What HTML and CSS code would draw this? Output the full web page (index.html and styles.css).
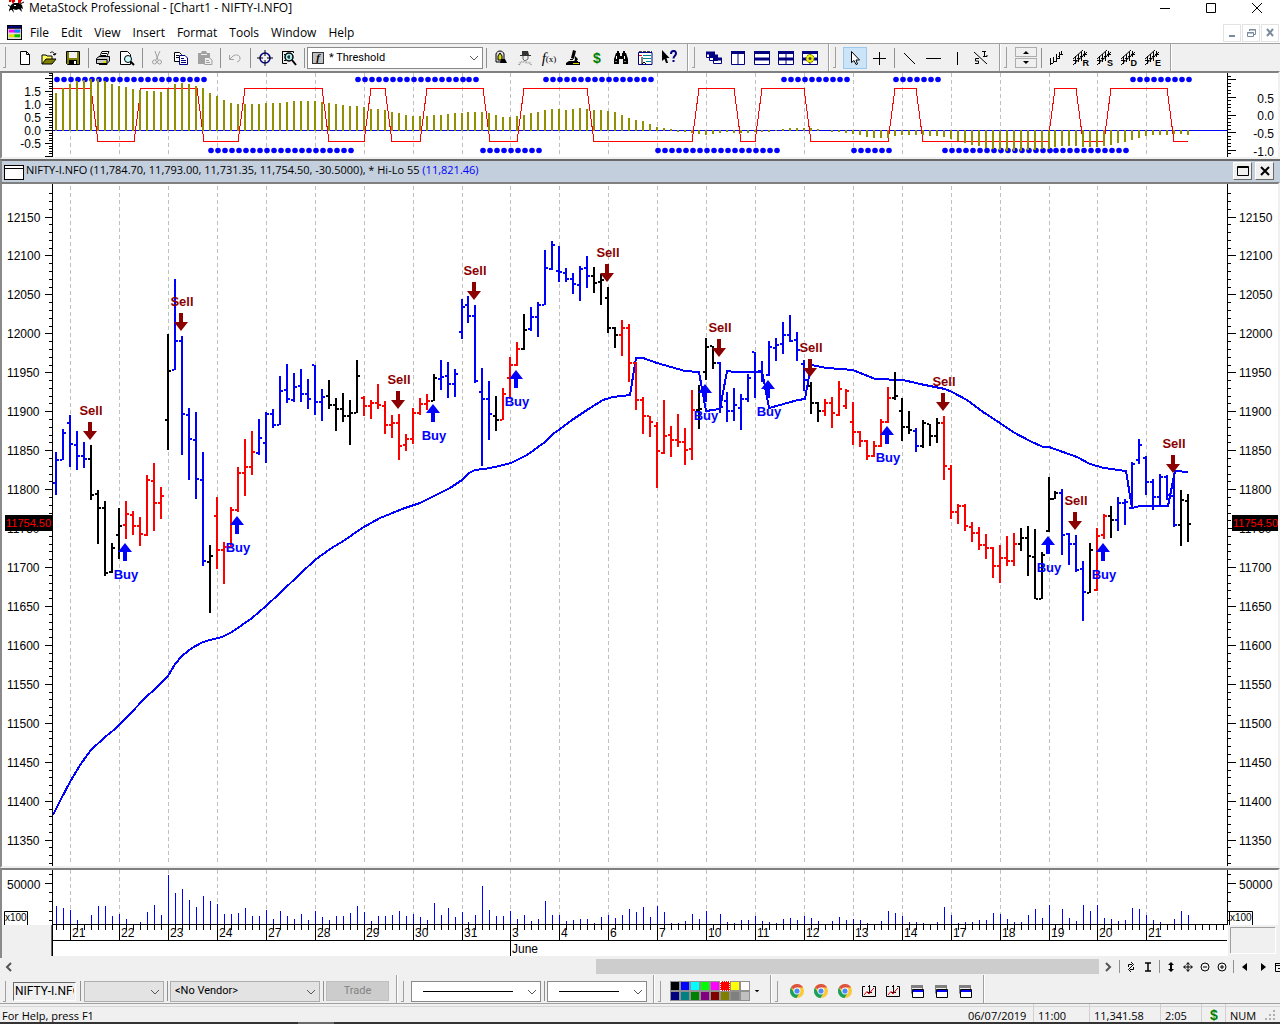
FILE: index.html
```html
<!DOCTYPE html>
<html lang="en">
<head>
<meta charset="utf-8">
<meta name="viewport" content="width=device-width, initial-scale=1">
<title>MetaStock Professional - [Chart1 - NIFTY-I.NFO]</title>
<link rel="stylesheet" href="styles.css">
</head>
<body>
<svg class="defs" aria-hidden="true">
  <defs>
    <symbol id="i-chrome" viewBox="0 0 16 16"><circle cx="8" cy="8" r="7" fill="#fbc938"/><path d="M8 8 1.9 4.5A7 7 0 0 1 14.1 4.6H8z" fill="#de5246"/><path d="M1.9 4.5A7 7 0 0 0 7.5 15L10.8 9.6 8 8 5 9.4z" fill="#1aa15f"/><circle cx="8" cy="8" r="3.4" fill="#fff"/><circle cx="8" cy="8" r="2.6" fill="#4c8bf5"/></symbol>
    <symbol id="i-chartwin" viewBox="0 0 16 16"><path d="M4 3.500H1.500V13.500H14.500V3.500H12M6 9.500H11M8.500 2V10M7 3.500H8.500" fill="none" stroke="#000"/><path d="M3 12 6 8.500 8 11 11 7 13 5" fill="none" stroke="#e00000"/></symbol>
    <symbol id="i-wins" viewBox="0 0 16 16"><path d="M2 2H14V5H2z" fill="#808080"/><path d="M2.500 5V10.500H4M13.500 5V7" stroke="#808080" fill="none"/><path d="M3.500 6.500H14.500V14.500H3.500z" fill="#fff" stroke="#000"/><path d="M4 7H14V9H4z" fill="#00f"/></symbol>
    <symbol id="i-bars" viewBox="0 0 16 16"><path d="M2.500 8V15M2.500 13.500H5M5.500 7V13M5.500 11.500H8M8.500 4V12M8.500 8.500H11M11.500 2V9M10 6.500H12M12 4.500H15M13.500 1V5" fill="none" stroke="#000"/></symbol>
    <symbol id="i-channel" viewBox="0 0 16 16"><path d="M1 9 11 0M1 15 15 2M3.500 6V14M6.500 4V12M9.500 2V11M12.500 1V7M1 10.500H5M5 8.500H8M8 6.500H11M11 4.500H15" fill="none" stroke="#000"/></symbol>
    <symbol id="i-chev" viewBox="0 0 10 6"><path d="M1 1 5 5 9 1" fill="none" stroke="#555" stroke-width="1"/></symbol>
  </defs>
</svg>

<header class="titlebar">
  <svg class="app-icon" viewBox="0 0 16 14" aria-hidden="true"><path d="M2 0V2M4 0 5 2 6 0V2M10 0H14M10 2H13" stroke="#d00" fill="none" stroke-width="2"/><path d="M3 5 6 3H11L14 5 15 9 13 8 14 12 11 9 8 10 5 9 6 13 3 9 1 12 2 7z" fill="#000"/><path d="M0 5 3 7M12 4 16 2M1 10 4 9" stroke="#000" fill="none"/><path d="M6 5H8V6H6z" fill="#fff"/></svg>
  <h1>MetaStock Professional - [Chart1 - NIFTY-I.NFO]</h1>
  <div class="win-buttons">
    <button type="button" aria-label="Minimize"><svg viewBox="0 0 12 12"><path d="M1 6.500H11" stroke="#000"/></svg></button>
    <button type="button" aria-label="Maximize"><svg viewBox="0 0 12 12"><path d="M1.500 1.500H10.500V10.500H1.500z" stroke="#000" fill="none"/></svg></button>
    <button type="button" aria-label="Close"><svg viewBox="0 0 12 12"><path d="M1 1 11 11M11 1 1 11" stroke="#000"/></svg></button>
  </div>
</header>

<nav class="menubar" aria-label="Main menu">
  <svg class="doc-icon" viewBox="0 0 16 16" aria-hidden="true"><path d="M0 0H16V16H0z" fill="#000"/><path d="M1 1H15V3H1z" fill="#000080"/><path d="M1 4H15V15H1z" fill="#ddd"/><path d="M2 5H14V8H2z" fill="#f0f"/><path d="M8 5H14V8H8z" fill="#08f"/><path d="M2 10H14V13H2z" fill="#dd0"/><path d="M8 10H14V13H8z" fill="#0b0"/></svg>
  <button type="button">File</button><button type="button">Edit</button><button type="button">View</button><button type="button">Insert</button><button type="button">Format</button><button type="button">Tools</button><button type="button">Window</button><button type="button">Help</button>
  <div class="mdi-buttons">
    <button type="button" aria-label="Minimize chart"><svg viewBox="0 0 12 12"><path d="M3 9H9" stroke="#7a8a9e" stroke-width="2"/></svg></button>
    <button type="button" aria-label="Restore chart"><svg viewBox="0 0 12 12"><path d="M4.500 4V2.500H10.500V7.500H9M4 3H11M2.500 5.500H8.500V9.500H2.500zM2 6H9" stroke="#7a8a9e" fill="none"/></svg></button>
    <button type="button" aria-label="Close chart"><svg viewBox="0 0 12 12"><path d="M3 2 9 9M9 2 3 9" stroke="#7a8a9e" stroke-width="2"/></svg></button>
  </div>
</nav>

<div class="toolbar" role="toolbar" aria-label="Standard">
  <div class="group">
    <button type="button" aria-label="New"><svg viewBox="0 0 16 16"><path d="M3.500 1.500H9.500L12.500 4.500V14.500H3.500zM9.500 1.500V4.500H12.500" fill="#fff" stroke="#000"/></svg></button>
    <button type="button" aria-label="Open"><svg viewBox="0 0 16 16"><path d="M1 14V5H5L6 6H11V9" fill="#ffff60" stroke="#000"/><path d="M1 14 5 9H15L11 14z" fill="#808000" stroke="#000"/><path d="M9 3C11 1 13 2 14 5M14 5 12 4.500M14 5 15 3" fill="none" stroke="#000"/></svg></button>
    <button type="button" aria-label="Save"><svg viewBox="0 0 16 16"><path d="M1.500 1.500H14.500V14.500H2.500L1.500 13.500z" fill="#808000" stroke="#000"/><path d="M4 2H12V8H4z" fill="#f0f0f0"/><path d="M4 10H12V14H4z" fill="#000"/><path d="M9 11H11V14H9z" fill="#fff"/></svg></button>
    <span class="sep"></span>
    <button type="button" aria-label="Print"><svg viewBox="0 0 16 16"><path d="M5 6 7 1.500H14L12 6" fill="#fff" stroke="#000"/><path d="M7 3.500H12M6 5.500H11" stroke="#000"/><path d="M1.500 8.500 4 6.500H14.500V11L12 13.500H1.500z" fill="#ccc" stroke="#000"/><path d="M2 9.500H12V14.500H4" fill="none" stroke="#000"/><path d="M8 11H11V13H8z" fill="#dd0"/></svg></button>
    <button type="button" aria-label="Print preview"><svg viewBox="0 0 16 16"><path d="M1.500 1.500H8.500L11.500 4.500V14.500H1.500z" fill="#fff" stroke="#000"/><circle cx="9" cy="9" r="3.500" fill="#c8ffff" stroke="#000"/><path d="M11.500 11.500 15 15" stroke="#000" stroke-width="2"/></svg></button>
    <span class="sep"></span>
    <button type="button" disabled aria-label="Cut"><svg viewBox="0 0 16 16"><path d="M6 1 9 10M11 1 7 10" stroke="#a0a0a0" fill="none"/><circle cx="5.500" cy="12" r="2" stroke="#a0a0a0" fill="none"/><circle cx="10.500" cy="12" r="2" stroke="#a0a0a0" fill="none"/></svg></button>
    <button type="button" aria-label="Copy"><svg viewBox="0 0 16 16"><path d="M1.500 2.500H6.500L8.500 4.500V11.500H1.500z" fill="#fff" stroke="#000"/><path d="M3 5.500H6M3 7.500H6" stroke="#000"/><path d="M6.500 5.500H12L14.500 8V14.500H6.500z" fill="#fff" stroke="#000080"/><path d="M8 8.500H11M8 10.500H13M8 12.500H13" stroke="#000080"/></svg></button>
    <button type="button" disabled aria-label="Paste"><svg viewBox="0 0 16 16"><path d="M1 3H4L5 1H9L10 3H13V14H1z" fill="#a0a0a0"/><path d="M4 4.500H10" stroke="#eee"/><path d="M7.500 7.500H12L15 10V14.500H7.500z" fill="#f0f0f0" stroke="#a0a0a0"/><path d="M9 10.500H12M9 12.500H13" stroke="#a0a0a0"/></svg></button>
    <span class="sep"></span>
    <button type="button" disabled aria-label="Undo"><svg viewBox="0 0 16 16"><path d="M2.500 5V9.500H7M3 9 6 6C9 4 13 5 13 8S12 11 10 12" fill="none" stroke="#a0a0a0"/></svg></button>
    <span class="sep"></span>
    <button type="button" aria-label="Crosshair"><svg viewBox="0 0 16 16"><circle cx="8" cy="8" r="5" fill="none" stroke="#000080" stroke-width="1.500"/><path d="M8 0V6M8 10V16M0 8H6M10 8H16" stroke="#000"/></svg></button>
    <button type="button" aria-label="Explore"><svg viewBox="0 0 16 16"><path d="M1.500 1V13.500H6M1 1.500H12.500V3M3 4.500H5M3 10.500H5" stroke="#000" fill="none"/><circle cx="8" cy="7" r="4" fill="#aee" stroke="#000" stroke-width="1.500"/><path d="M6 7H9M8 5V9" stroke="#000"/><path d="M11 10 15 15" stroke="#000" stroke-width="2"/></svg></button>
    <span class="sep"></span>
    <div class="combo threshold">
      <span class="f-tile" aria-hidden="true">f</span>
      <select aria-label="Indicator quick list"><option>* Threshold</option></select>
      <svg class="chev"><use href="#i-chev"/></svg>
    </div>
    <span class="sep"></span>
    <button type="button" aria-label="Alerts"><svg viewBox="0 0 16 16"><path d="M3 12V4C4 0 10 0 11 4V12z" fill="#ddd" stroke="#000"/><path d="M5 10V6L7 3 9 6V10z" fill="#dd0" stroke="#000"/><path d="M8 9H12L14 13H7z" fill="#000"/></svg></button>
    <button type="button" aria-label="Expert Advisor"><svg viewBox="0 0 16 16"><path d="M5 1H11L12 5H14V6H3V5H5z" fill="#333"/><path d="M6 6V9L8 11 11 9V6" fill="#eee" stroke="#666"/><path d="M2 15C3 12 5 11 8 12S13 12 14 15" fill="none" stroke="#999" stroke-width="2" stroke-dasharray="1 1"/></svg></button>
    <button type="button" class="fx" aria-label="Indicator Builder"><i>f</i><small>(x)</small></button>
    <button type="button" aria-label="System Tester"><svg viewBox="0 0 16 16"><path d="M8 0 11 1 9 9 6 8zM10 6 13 9 11 12H9L10 9zM5 9H8V10H5zM4 11H13V12H15V15H1V13z" fill="#000"/><path d="M8 13H14V14H8z" fill="#dd0"/></svg></button>
    <button type="button" class="dollar" aria-label="OptionScope">$</button>
    <button type="button" aria-label="The Explorer"><svg viewBox="0 0 16 16"><path d="M4 1H6V3H7V6H9V3H10V1H12V3H13L15 9V14H10V9H6V14H1V9L3 3H4z" fill="#000"/><path d="M3.500 6V9M11.500 6V9M3 11V12M12 11V12" stroke="#fff"/></svg></button>
    <button type="button" aria-label="Report"><svg viewBox="0 0 16 16"><path d="M1.500 2.500H15V14.500H1.500z" fill="#fff" stroke="#000080"/><path d="M2 1.500H15" stroke="#444" stroke-dasharray="3 1"/><path d="M2 5.500H5" stroke="#e00"/><path d="M6 5.500H14M6 8.500H14M9 11.500H14" stroke="#088"/><path d="M5 7V14L7 12 9 14" stroke="#000" fill="none"/></svg></button>
    <button type="button" aria-label="Context help"><svg viewBox="0 0 16 16"><path d="M1 0V11L3.500 9 5 13H7L5.500 8H8.500z" fill="#000"/><path d="M10 4C10 0 15 0 15 3.500 15 6 12.500 5.500 12.500 8.500M12.500 10V12" stroke="#000080" stroke-width="2" fill="none"/></svg></button>
  </div>
  <div class="group">
    <button type="button" aria-label="Cascade"><svg viewBox="0 0 16 16"><path d="M.5 2.500H8.500V7.500H.5zM3.500 5.500H11.500V10.500H3.500zM7.500 8.500H15.500V13.500H7.500z" fill="#fff" stroke="#000080"/><path d="M0 3H9M3 6H12M7 9H16" stroke="#000080" stroke-width="3"/></svg></button>
    <button type="button" aria-label="Tile columns"><svg viewBox="0 0 16 16"><path d="M1.500 1.500H14.500V14.500H1.500zM8 3V14" fill="#fff" stroke="#000080"/><path d="M1 2.500H15" stroke="#000080" stroke-width="3"/></svg></button>
    <button type="button" aria-label="Tile rows"><svg viewBox="0 0 16 16"><path d="M.5 1.500H15.500V14.500H.5z" fill="#fff" stroke="#000080"/><path d="M0 2.500H16M0 9H16" stroke="#000080" stroke-width="3"/></svg></button>
    <button type="button" aria-label="Tile grid"><svg viewBox="0 0 16 16"><path d="M.5 1.500H15.500V14.500H.5zM8 2V14" fill="#fff" stroke="#000080"/><path d="M0 2.500H16M0 9H16" stroke="#000080" stroke-width="3"/></svg></button>
    <button type="button" aria-label="Layout options"><svg viewBox="0 0 16 16"><path d="M.5 1.500H15.500V14.500H.5zM8 2V14" fill="#fff" stroke="#000080"/><path d="M0 2.500H16M0 9H16" stroke="#000080" stroke-width="3"/><circle cx="8" cy="8.500" r="4" fill="#ee0" stroke="#660" stroke-dasharray="2 1"/><circle cx="8" cy="8.500" r="1.500" fill="#444"/></svg></button>
  </div>
  <div class="group">
    <button type="button" class="active" aria-label="Pointer"><svg viewBox="0 0 16 16"><path d="M4.500 1.500V12.500L7 10.500 9 14.500 10.500 14 9 10H12.500z" fill="#fff" stroke="#000"/></svg></button>
    <button type="button" aria-label="Cross"><svg viewBox="0 0 16 16"><path d="M8.500 2V15M2 8.500H15" stroke="#000"/></svg></button>
    <span class="sep"></span>
    <button type="button" aria-label="Trendline"><svg viewBox="0 0 16 16"><path d="M3 3 14 14" stroke="#000"/></svg></button>
    <button type="button" aria-label="Horizontal line"><svg viewBox="0 0 16 16"><path d="M1 8.500H16" stroke="#000"/></svg></button>
    <button type="button" aria-label="Vertical line"><svg viewBox="0 0 16 16"><path d="M8.500 2V15" stroke="#000"/></svg></button>
    <button type="button" aria-label="Support and resistance"><svg viewBox="0 0 16 16"><path d="M1 2 14 14M11.500 1V6.500M9 1.500H13M10 6.500H14V5M6 8.500H2.500V11H5.500V13.500H2" fill="none" stroke="#000"/></svg></button>
  </div>
  <div class="group">
    <div class="spinner"><button type="button" aria-label="Up"><svg viewBox="0 0 8 4"><path d="M1 4 4 1 7 4z"/></svg></button><button type="button" aria-label="Down"><svg viewBox="0 0 8 4"><path d="M1 0 4 3 7 0z"/></svg></button></div>
    <span class="sep"></span>
    <button type="button" aria-label="Bars"><svg><use href="#i-bars"/></svg></button>
    <button type="button" class="lettered" aria-label="Raff channel"><svg><use href="#i-channel"/></svg><b>R</b></button>
    <button type="button" class="lettered" aria-label="Standard deviation channel"><svg><use href="#i-channel"/></svg><b>S</b></button>
    <button type="button" class="lettered" aria-label="Deviation channel"><svg><use href="#i-channel"/></svg><b>D</b></button>
    <button type="button" class="lettered" aria-label="Error channel"><svg><use href="#i-channel"/></svg><b>E</b></button>
  </div>
</div>

<main class="workspace">
  <section class="pane"><svg id="osc" viewBox="2 73 1276 84" role="img" aria-label="Threshold indicator"></svg></section>
  <div class="pane-head">
    <span class="win-glyph" aria-hidden="true"></span>
    <h2>NIFTY-I.NFO (11,784.70, 11,793.00, 11,731.35, 11,754.50, -30.5000), * Hi-Lo 55 <span class="hilo">(11,821.46)</span></h2>
    <button type="button" aria-label="Maximize pane"><svg viewBox="0 0 12 12"><path d="M.5 1.500H11.500V10.500H.5zM0 2.500H12" fill="none" stroke="#000"/></svg></button>
    <button type="button" aria-label="Close pane"><svg viewBox="0 0 12 12"><path d="M2 2 10 10M10 2 2 10" stroke="#000" stroke-width="2"/></svg></button>
  </div>
  <section class="pane"><svg id="price" viewBox="2 184 1276 682" role="img" aria-label="NIFTY-I.NFO price chart"></svg></section>
  <section class="pane last"><svg id="volume" viewBox="2 870 1276 88" role="img" aria-label="Volume and dates"></svg></section>
</main>

<div class="scrollrow">
  <button type="button" aria-label="Scroll left"><svg viewBox="0 0 10 10"><path d="M7 1 3 5 7 9" fill="none" stroke="#555" stroke-width="2"/></svg></button>
  <div class="track"><div class="thumb"></div></div>
  <button type="button" aria-label="Scroll right"><svg viewBox="0 0 10 10"><path d="M3 1 7 5 3 9" fill="none" stroke="#555" stroke-width="2"/></svg></button>
  <span class="sep"></span>
  <button type="button" aria-label="Refresh"><svg viewBox="0 0 10 10"><path d="M2.500 5V2.500H6M7.500 5V7.500H4M5 0 7.500 2.500 5 5M5 5 2.500 7.500 5 10" fill="none" stroke="#000"/></svg></button>
  <button type="button" aria-label="Bar width"><svg viewBox="0 0 10 10"><path d="M2 1H8M2 9H8M5 1V9" stroke="#000" stroke-width="1.500"/></svg></button>
  <span class="sep"></span>
  <button type="button" aria-label="Scale"><svg viewBox="0 0 10 10"><path d="M5 0 8 3H6V7H8L5 10 2 7H4V3H2z"/></svg></button>
  <button type="button" aria-label="Move"><svg viewBox="0 0 10 10"><path d="M5 1V9M1 5H9M3.500 2.500 5 .5 6.500 2.500M3.500 7.500 5 9.500 6.500 7.500M2.500 3.500 .5 5 2.500 6.500M7.500 3.500 9.500 5 7.500 6.500" fill="none" stroke="#000"/></svg></button>
  <button type="button" aria-label="Zoom out"><svg viewBox="0 0 10 10"><circle cx="5" cy="5" r="4" fill="none" stroke="#000"/><path d="M3 5H7" stroke="#000"/></svg></button>
  <button type="button" aria-label="Zoom in"><svg viewBox="0 0 10 10"><circle cx="5" cy="5" r="4" fill="none" stroke="#000"/><path d="M3 5H7M5 3V7" stroke="#000"/></svg></button>
  <span class="sep"></span>
  <button type="button" aria-label="Previous"><svg viewBox="0 0 10 10"><path d="M7 1V9L2 5z"/></svg></button>
  <button type="button" aria-label="Next"><svg viewBox="0 0 10 10"><path d="M4 1V9L9 5z"/></svg></button>
  <button type="button" class="list" aria-label="Window list"><svg viewBox="0 0 10 10"><path d="M1.500 1.500H11M1.500 1V9.500H11M2 3.500H11M4 6.500H10" fill="none" stroke="#000"/></svg></button>
</div>

<div class="toolbar bottom" role="toolbar" aria-label="Trading and drawing">
  <div class="group">
    <input class="symbol" type="text" value="NIFTY-I.NFO" aria-label="Symbol">
    <span class="sep wide"></span>
    <div class="combo account"><select aria-label="Account"><option></option></select><svg class="chev"><use href="#i-chev"/></svg></div>
    <span class="sep"></span>
    <div class="combo vendor"><select aria-label="Vendor"><option>&lt;No Vendor&gt;</option></select><svg class="chev"><use href="#i-chev"/></svg></div>
    <span class="sep"></span>
    <button type="button" class="trade" disabled>Trade</button>
  </div>
  <div class="group">
    <div class="combo line-style"><select aria-label="Line style"><option></option></select><span class="stroke"></span><svg class="chev"><use href="#i-chev"/></svg></div>
    <span class="sep"></span>
    <div class="combo line-weight"><select aria-label="Line weight"><option></option></select><span class="stroke"></span><svg class="chev"><use href="#i-chev"/></svg></div>
  </div>
  <div class="group">
    <div class="palette" id="palette"></div>
    <button type="button" class="more" aria-label="More colors"><svg viewBox="0 0 8 4"><path d="M1 0 4 3 7 0z"/></svg></button>
  </div>
  <div class="group">
    <button type="button" aria-label="Web 1"><svg><use href="#i-chrome"/></svg></button>
    <button type="button" aria-label="Web 2"><svg><use href="#i-chrome"/></svg></button>
    <button type="button" aria-label="Web 3"><svg><use href="#i-chrome"/></svg></button>
    <button type="button" aria-label="Chart template 1"><svg><use href="#i-chartwin"/></svg></button>
    <button type="button" aria-label="Chart template 2"><svg><use href="#i-chartwin"/></svg></button>
    <button type="button" aria-label="Layout 1"><svg><use href="#i-wins"/></svg></button>
    <button type="button" aria-label="Layout 2"><svg><use href="#i-wins"/></svg></button>
    <button type="button" aria-label="Layout 3"><svg><use href="#i-wins"/></svg></button>
  </div>
</div>

<footer class="statusbar">
  <span class="help">For Help, press F1</span>
  <span class="cell date">06/07/2019</span>
  <span class="cell time">11:00</span>
  <span class="cell value">11,341.58</span>
  <span class="cell clock">2:05</span>
  <span class="cell dollar">$</span>
  <span class="cell num">NUM</span>
  <svg class="grip" viewBox="0 0 12 12" aria-hidden="true"><path d="M8 0h2v2H8zM4 4h2v2H4zM8 4h2v2H8zM0 8h2v2H0zM4 8h2v2H4zM8 8h2v2H8z" fill="#b0b0b0"/></svg>
</footer>
<div class="taskbar-edge"><span></span></div>
<script src="chart.js"></script>
</body>
</html>
```
FILE: styles.css
```css
*, *::before { box-sizing: border-box; }
body {
  margin: 0;
  min-height: 100vh;
  display: flex;
  flex-direction: column;
  background: #f0f0f0;
  color: #000;
  font: 12px/16px "Open Sans", "Noto Sans", sans-serif;
  overflow-x: hidden;
}
button, select, input { font: inherit; color: inherit; margin: 0; }
button { border: 0; padding: 0; background: none; display: flex; align-items: center; justify-content: center; flex: none; }
h1, h2 { margin: 0; font: inherit; white-space: nowrap; }
svg { display: block; }
.defs { position: absolute; width: 0; height: 0; }

.titlebar { display: flex; height: 22px; background: #fff; padding-left: 8px; align-items: flex-start; }
.app-icon { width: 16px; height: 14px; margin-right: 5px; }
.titlebar h1 { flex: 1; }
.win-buttons { display: flex; }
.win-buttons button { width: 46px; height: 15px; }
.win-buttons svg { width: 12px; height: 12px; }

.menubar { display: flex; align-items: center; height: 22px; background: #fff; border-bottom: 1px solid #a0a0a0; padding-left: 7px; }
.doc-icon { width: 15px; height: 15px; margin-right: 2px; }
.menubar > button { padding: 0 6px; }
.mdi-buttons { display: flex; gap: 1px; margin-left: auto; padding-right: 1px; }
.mdi-buttons button { width: 18px; height: 18px; border: 1px solid #e3e3e3; }
.mdi-buttons svg { width: 12px; height: 12px; }

.toolbar { display: flex; height: 27px; background: #f0f0f0; }
.group { display: flex; align-items: center; margin-right: 1px; padding: 0 6px 0 3px; border-right: 1px solid #a0a0a0; box-shadow: 1px 0 #fff; flex: none; }
.group::before { content: ""; width: 3px; height: 21px; margin-right: 7px; border: 1px solid #a0a0a0; border-width: 0 1px 1px 0; }
.toolbar button { width: 24px; height: 22px; }
.toolbar button svg { width: 16px; height: 16px; }
.toolbar button.active { background: #cce4f7; border: 1px solid #99c9ef; }
.sep { flex: none; width: 6px; height: 20px; display: flex; justify-content: center; }
.sep::before { content: ""; width: 1px; background: #909090; }
.sep.wide { width: 8px; }
.combo { position: relative; height: 22px; flex: none; }
.combo select { appearance: none; width: 100%; height: 100%; border: 1px solid #8a8a8a; border-radius: 0; background: #fff; padding: 0 4px; font: 11px/16px Roboto, sans-serif; }
.chev { position: absolute; right: 4px; top: 8px; width: 10px; height: 6px; pointer-events: none; }
.threshold { width: 176px; }
.threshold select { padding-left: 21px; }
.f-tile { position: absolute; left: 5px; top: 5px; width: 12px; height: 12px; border: 1px solid #333; background: #c0c0c0; font: italic bold 11px/9px "Liberation Serif", serif; text-align: center; }
.fx { font-family: "Liberation Serif", serif; }
.fx i { font-size: 15px; }
.fx small { font-size: 9px; padding-top: 3px; }
.dollar { color: #008000; font: bold 14px/16px "Liberation Sans", sans-serif; }
.lettered { position: relative; }
.lettered b { position: absolute; right: 3px; bottom: 2px; font: bold 9px/8px "Liberation Sans", sans-serif; background: #f0f0f0; }
.spinner { display: flex; flex-direction: column; gap: 1px; width: 24px; padding: 0 1px; }
.toolbar .spinner button { width: 22px; height: 10px; border: 1px solid #adadad; }
.toolbar .spinner svg { width: 8px; height: 4px; }

.workspace { display: block; background: #f0f0f0; }
.pane { border: 2px solid #f0f0f0; border-top-color: #808080; border-left-color: #8a8a8a; background: #fff; }
.pane.last { border-bottom: 0; }
.pane svg { width: 100%; height: auto; font: 12px "Liberation Sans", Arial, sans-serif; }
.pane .signal { font-size: 13px; font-weight: bold; text-anchor: middle; }
.pane .tag { font-size: 11px; fill: #f00; }
.pane .small { font-size: 10px; }
.pane-head { display: flex; height: 23px; border-top: 2px solid #696969; border-left: 2px solid #8a8a8a; background: #c3cfdd; padding: 1px 6px 0 2px; gap: 3px; }
.win-glyph { width: 20px; height: 15px; margin-top: 3px; border: 1px solid #000; background: linear-gradient(#fff 2px, #000 2px, #000 3px, #fff 3px); }
.pane-head h2 { flex: 1; margin-left: -1px; font-size: 11px; line-height: 16px; }
.hilo { color: #00f; }
.pane-head button { width: 19px; height: 18px; background: #f0f0f0; border: 1px solid; border-color: #fff #696969 #696969 #fff; }
.pane-head button svg { width: 12px; height: 12px; }

.scrollrow { display: flex; align-items: center; height: 17px; overflow: hidden; }
.scrollrow button { width: 17px; height: 17px; }
.scrollrow button svg { width: 10px; height: 10px; }
.scrollrow .sep { height: 13px; }
.scrollrow .list { margin-right: -7px; }
.track { flex: 1; height: 15px; display: flex; justify-content: flex-end; }
.thumb { width: 46.5%; background: #cdcdcd; }

.bottom { height: 29px; border-bottom: 1px solid #a0a0a0; }
.bottom .group { padding-top: 4px; }
.bottom .combo { height: 21px; }
.symbol { width: 63px; height: 19px; border: 1px solid; border-color: #696969 #fff #fff #696969; border-radius: 0; background: #f0f0f0; padding: 0 1px; font: 12px/16px Roboto, sans-serif; }
.account { width: 80px; }
.vendor { width: 150px; }
.account select, .vendor select { background: #e3e3e3; border-color: #adadad; }
.toolbar .trade { width: 63px; height: 20px; margin-right: 1px; background: #ccc; border: 1px solid #bfbfbf; color: #838383; font: 11px/16px Roboto, sans-serif; }
.line-style { width: 130px; }
.line-weight { width: 100px; }
.stroke { position: absolute; left: 12px; right: 28px; top: 10px; height: 1px; background: #000; pointer-events: none; }
.palette { display: grid; grid-template-columns: repeat(8, 10px); width: 82px; padding-left: 2px; }
.toolbar .palette button { width: 10px; height: 10px; border: 1px solid #909090; }
.toolbar .palette .chosen { border: 1px dotted #fff; }
.toolbar .more { width: 14px; }
.toolbar .more svg { width: 6px; height: 3px; }

.statusbar { display: flex; height: 18px; padding-left: 2px; font-size: 11px; line-height: 24px; overflow: hidden; box-shadow: inset 0 2px #f0f0f0, inset 0 3px #d7d7d7; }
.help { flex: 1; }
.cell { padding-left: 4px; border-left: 1px solid #d0d0d0; }
.cell.date { width: 69px; border-left: 0; }
.cell.time { width: 56px; }
.cell.value { width: 71px; }
.cell.clock { width: 41px; }
.cell.dollar { width: 24px; padding-left: 8px; line-height: 22px; }
.cell.num { width: 36px; }
.grip { width: 12px; height: 12px; margin: 6px 3px 0 4px; }
.taskbar-edge { height: 2px; flex: none; background: #333; padding-left: 298px; }
.taskbar-edge span { display: block; width: 36px; height: 2px; background: #6a6a6a; }
```
FILE: chart.js
```js
const BLUE = '#0000ff', RED = '#ff0000', BLACK = '#000000', MAROON = '#8b0000', OLIVE = '#909000';
const LEFT = 52, RIGHT = 1227;

// Horizontal position of the bar with index i.
const barX = i => 56 + 7 * i - (i >= 59 ? 1 : 0) - (i >= 143 ? 1 : 0);

const rect = (x, y, w, h, fill) => `<rect x="${x}" y="${y}" width="${w}" height="${h}" fill="${fill}" shape-rendering="crispEdges"/>`;
const text = (x, y, s, extra = '') => `<text x="${x}" y="${y}" ${extra}>${s}</text>`;
const poly = (pts, w) => `<polyline points="${pts}" fill="none" shape-rendering="crispEdges" stroke-width="${w}"`;

// Session starts: bar index and day of the month.
const days = [[2,'21'],[9,'22'],[16,'23'],[23,'24'],[30,'27'],[37,'28'],[44,'29'],[51,'30'],[58,'31'],[65,'3'],[72,'4'],[79,'6'],[86,'7'],[93,'10'],[100,'11'],[107,'12'],[114,'13'],[121,'14'],[128,'17'],[135,'18'],[142,'19'],[149,'20'],[156,'21']];

function grid(top, bottom) {
  return days.map(([i]) => `<path d="M${barX(i) + 0.5} ${top}V${bottom}" stroke="#c0c0c0" stroke-dasharray="4 3"/>`).join('');
}

function axisTicks(side, first, last, step, origin, every) {
  let out = '';
  for (let k = Math.ceil((first - origin) / step); origin + k * step <= last; k++) {
    const y = Math.floor(origin + k * step);
    const major = k % every === 0;
    out += side === 'left' ? rect(major ? 45 : 49, y, major ? 7 : 3, 1, BLACK) : rect(RIGHT, y, major ? 9 : 4, 1, BLACK);
  }
  return out;
}

function drawOscillator() {
  const hist = [93,88,84,81,80,79,79,81,84,86,87,89,90,91,91,92,89,84,83,84,86,88,93,96,100,103,104,104,104,104,103,103,103,102,101,101,101,101,102,103,104,105,106,106,107,109,109,110,112,113,115,116,116,116,
    115,115,114,113,113,112,112,112,113,115,117,117,116,115,113,112,110,109,109,110,109,108,109,110,110,111,112,115,118,120,121,124,127,128,129,132,132,133,134,135,134,133,132,133,133,133,132,132,132,131,129,128,128,128,128,129,130,132,132,133,
    134,135,137,138,138,138,136,135,135,135,135,136,136,137,139,141,143,145,146,148,149,150,151,151,151,150,150,149,149,147,146,146,146,147,147,147,146,145,143,142,140,138,136,135,135,135,134,134,135];
  let s = grid(73, 154) + rect(LEFT, 130, RIGHT - LEFT, 1, BLUE);
  const hi = [[53,91],[141,197],[245,322],[371,385],[427,483],[524,587],[699,734],[762,804],[895,916],[1055,1076],[1111,1167]];
  let pts = '';
  hi.forEach(([a, b], k) => { if (k) pts += `${a - 7},141.500 `; pts += `${a},88.500 ${b},88.500 ${b + 7},141.500 `; });
  s += poly(pts + '1188,141.500', 1) + ` stroke="${RED}"/>`;
  const runs = [[0,21,79],[43,60,79],[70,85,79],[104,113,79],[120,126,79],[154,162,79],[22,42,150],[61,69,150],[86,103,150],[114,119,150],[127,153,150]];
  runs.forEach(([a, b, y]) => { for (let i = a; i <= b; i++) s += `<circle cx="${barX(i) + 1}" cy="${y + 0.5}" r="2.800" fill="${BLUE}"/>`; });
  hist.forEach((y, i) => { s += y < 130 ? rect(barX(i) - 1, y, 2, 131 - y, OLIVE) : rect(barX(i) - 1, 130, 2, y - 130, OLIVE); });
  s += rect(LEFT, 73, 1, 84, BLACK) + rect(RIGHT, 73, 1, 84, BLACK);
  s += axisTicks('left', 73, 157, 2.6, 130.5, 5) + axisTicks('right', 73, 157, 3.54, 115, 5);
  [['1.5',96],['1.0',109],['0.5',122],['0.0',135],['-0.5',148]].forEach(([t, y]) => s += text(41, y, t, 'text-anchor="end"'));
  [['0.5',103],['0.0',120],['-0.5',138],['-1.0',156]].forEach(([t, y]) => s += text(1274, y, t, 'text-anchor="end"'));
  document.getElementById('osc').innerHTML = s;
}

// Each row: colour, then high, low, open and close positions.
const bars = `b452,495,483,460 b429,460,460,433 b415,467,423,444 b431,470,445,456 b442,468,456,459 k445,500,459,495 k490,544,494,508 k501,576,508,573 k543,573,572,548 k508,559,535,526
r501,539,525,514 r511,535,515,526 r517,546,526,534 r475,536,535,480 r463,531,481,503 r487,519,503,496 k334,450,420,371 b279,370,370,341 b336,455,341,414 b408,480,415,439
b412,499,440,479 b452,566,480,561 k545,613,562,556 r497,569,516,550 r542,584,550,547 r507,548,547,510 r467,512,510,473 r439,496,473,467 r431,475,467,452 b419,455,453,438
b412,463,443,414 b409,428,414,425 b376,425,425,391 b364,403,390,399 b373,402,400,387 b369,402,386,394 b379,409,394,399 b365,415,365,402 b389,421,402,397 k380,409,396,405
k398,431,405,409 k393,422,409,416 k400,445,416,413 k360,413,413,376 r396,416,398,406 r400,419,406,403 r384,409,403,405 r401,434,406,425 r415,438,425,423 r414,460,423,446
r434,451,445,439 r408,444,439,413 r398,415,413,404 r394,410,404,401 k374,401,401,378 b360,390,379,377 b362,398,376,384 b369,397,384,374 b299,339,332,307 b296,323,305,316
b305,383,316,381 b368,466,392,399 b381,440,399,414 k396,431,416,420 r388,420,420,394 r357,399,378,365 r342,366,365,349 k314,350,349,330 b307,331,329,317 b302,337,317,305
b250,305,305,268 b241,270,269,245 b246,282,271,272 b268,282,273,279 b273,294,279,284 b266,301,285,269 b256,288,268,276 k267,293,276,283 k274,305,282,280 k287,333,298,328
k327,348,328,335 r320,356,335,328 r324,382,328,363 r362,410,363,400 r397,434,400,416 r416,437,416,422 r422,488,426,451 r400,454,453,436 r426,457,435,440 r414,447,440,442
r428,465,442,450 r390,460,449,410 k385,429,410,409 k338,380,372,347 k346,369,346,363 b362,413,363,407 b392,422,401,411 b388,421,411,405 b394,430,408,399 b374,402,399,378
b352,398,352,372 b361,382,372,381 b341,376,375,347 b338,361,348,345 b322,354,344,335 b315,342,335,341 b332,361,340,350 b360,391,364,380 k382,414,386,403 k402,422,403,411
r399,416,411,403 r397,428,403,413 r381,416,415,389 r389,409,406,391 r402,445,422,432 r431,447,432,441 r440,460,441,456 r441,457,456,446 r419,447,446,422 r387,423,422,398
k372,400,398,396 k398,441,411,427 k411,434,427,430 b428,452,431,446 k420,448,446,423 k424,446,424,436 k418,443,436,423 r416,480,423,466 r465,519,469,512 r504,524,512,506
r504,531,506,526 r522,542,527,533 r527,550,533,545 r534,559,545,548 r547,578,548,566 r545,583,566,558 r536,566,558,561 r533,566,561,544 k528,551,544,538 k526,576,538,556
k529,599,557,599 k552,599,599,555 k477,532,531,499 k491,499,499,493 b489,555,493,535 b533,565,534,544 b535,572,544,570 b561,621,569,592 k543,593,593,550 r528,591,590,536
r514,539,535,516 k506,538,516,520 b497,531,520,503 b499,525,503,502 b462,508,508,464 b439,464,460,445 b456,495,458,482 b479,510,482,497 b474,506,497,477 b475,500,477,495
b475,527,496,525 k490,546,525,500 k494,542,501,524`.split(/\s+/);

const hiLo = '53,815 60,801 70,782 80,765 91,750 105,737 115,729 130,714 145,698 155,689 168,676 175,664 182,656 192,648 203,642 210,640 222,637 232,632 252,618 266,606 280,593 301,573 315,560 330,549 345,540 362,528 380,518 390,514 402,509 420,503 434,496 450,488 462,480 469,473 475,470 484,469 495,467 511,463 527,455 545,442 553,434 560,429 572,420 587,410 603,400 613,397 630,395 636,358 643,358 657,363 685,371 699,372 706,411 720,409 727,371 735,372 755,372 762,371 769,408 798,400 805,399 811,365 827,368 853,370 875,379 903,380 920,384 945,389 952,392 967,400 983,412 1000,423 1013,432 1030,441 1043,447 1049,447 1063,452 1077,457 1090,464 1104,468 1126,471 1132,508 1140,506 1168,506 1175,471 1188,472';

// Arrow centre and arrow top.
const sells = [[90,422],[181,313],[398,391],[474,282],[607,264],[719,339],[810,359],[943,393],[1075,512],[1173,455]];
const buys = [[125,543],[237,516],[433,404],[516,370],[705,384],[768,380],[887,426],[1048,536],[1103,543]];

function drawPrice() {
  const colors = { b: BLUE, r: RED, k: BLACK };
  const yOf = p => 216.5 + (12150 - p) * 0.779;
  let s = grid(186, 864);
  s += poly(hiLo, 2) + ` stroke="${BLUE}"/>`;
  bars.forEach((row, i) => {
    const [h, l, o, c] = row.slice(1).split(',').map(Number);
    const x = barX(i), col = colors[row[0]];
    s += rect(x - 1, h, 2, l - h, col) + rect(x - 3, o - 1, 2, 2, col) + rect(x + 1, c - 1, 2, 2, col);
  });
  sells.forEach(([x, y]) => {
    s += `<path d="M${x - 2} ${y}h4v9h5l-7 9l-7 -9h5z" fill="${MAROON}"/>` + text(x + 1, y - 7, 'Sell', `class="signal" fill="${MAROON}"`);
  });
  buys.forEach(([x, y]) => {
    s += `<path d="M${x - 2} ${y + 18}h4v-9h5l-7 -9l-7 9h5z" fill="${BLUE}"/>` + text(x + 1, y + 36, 'Buy', `class="signal" fill="${BLUE}"`);
  });
  s += rect(LEFT, 184, 1, 682, BLACK) + rect(RIGHT, 184, 1, 682, BLACK);
  s += axisTicks('left', 186, 864, 7.79, 217, 5) + axisTicks('right', 186, 864, 7.79, 217, 5);
  for (let p = 12150; p >= 11350; p -= 50) {
    const y = Math.round(yOf(p)) + 5;
    s += text(7, y, p) + text(1239, y, p);
  }
  s += rect(5, 515, 47, 16, BLACK) + rect(1232, 515, 46, 16, BLACK);
  s += text(6, 527, '11754.50', 'class="tag"') + text(1233, 527, '11754.50', 'class="tag"');
  document.getElementById('price').innerHTML = s;
}

function drawVolume() {
  const vol = [18,16,14,4,0,9,18,18,8,10,5,0,2,12,19,9,49,31,35,24,17,28,23,20,10,10,11,16,8,8,14,5,13,8,5,10,4,13,7,4,8,8,11,18,12,3,8,8,9,13,8,10,7,4,21,9,16,7,12,2,9,38,14,8,8,13,5,9,3,5,23,9,9,3,4,5,5,1,7,9,6,9,15,12,17,7,18,12,1,1,3,10,5,13,0,10,2,1,4,4,8,3,2,1,5,6,4,8,6,3,0,3,7,4,5,4,1,0,3,13,11,8,2,2,1,0,2,17,9,1,2,2,4,4,11,10,5,2,2,9,15,6,19,0,15,6,3,19,13,19,6,5,3,4,16,15,9,4,2,0,5,13,9];
  let s = grid(870, 923);
  vol.forEach((h, i) => { if (h) s += rect(barX(i), 924 - h, 1, h, BLUE); });
  s += rect(2, 925, 50, 33, '#f0f0f0') + rect(51, 925, 1, 31, '#696969') + rect(1228, 925, 50, 33, '#f0f0f0') + rect(2, 956, 1276, 2, '#f0f0f0');
  s += `<path d="M1230.500 953V927.500H1275" fill="none" stroke="#a0a0a0"/><path d="M1275.500 928V953.500H1231" fill="none" stroke="#fff"/>`;
  s += rect(LEFT, 870, 1, 86, BLACK) + rect(RIGHT, 870, 1, 55, BLACK) + rect(LEFT, 924, 1175, 1, BLACK) + rect(LEFT, 940, 1175, 1, BLACK);
  s += axisTicks('left', 870, 923, 9.2, 883.5, 6) + axisTicks('right', 870, 923, 9.2, 883.5, 6);
  for (let i = 0; barX(i) < RIGHT; i++) s += rect(barX(i), 924, 1, 6, BLACK);
  days.forEach(([i, d]) => { s += rect(barX(i), 924, 1, 17, BLACK) + text(barX(i) + 2, 937, d); });
  s += rect(barX(65), 940, 1, 16, BLACK) + text(barX(65) + 2, 953, 'June');
  s += text(7, 889, '50000') + text(1239, 889, '50000');
  [[4, 5], [1229, 1230]].forEach(([x, t]) => {
    s += `<path d="M${x + 0.5} 925V911.500H${x + 23.5}V925" fill="#fff" stroke="#000"/>` + text(t, 921, 'x100', 'class="small"');
  });
  document.getElementById('volume').innerHTML = s;
}

function drawPalette() {
  const colors = ['#000','#00f','#0ff','#0f0','#f0f','#f00','#ff0','#fff','#000080','#008080','#008000','#800080','#800000','#808000','#808080','#c0c0c0'];
  document.getElementById('palette').innerHTML = colors.map(c => `<button type="button" class="${c === '#f00' ? 'chosen' : ''}" aria-label="Color ${c}" style="background:${c}"></button>`).join('');
}

drawOscillator();
drawPrice();
drawVolume();
drawPalette();
```
